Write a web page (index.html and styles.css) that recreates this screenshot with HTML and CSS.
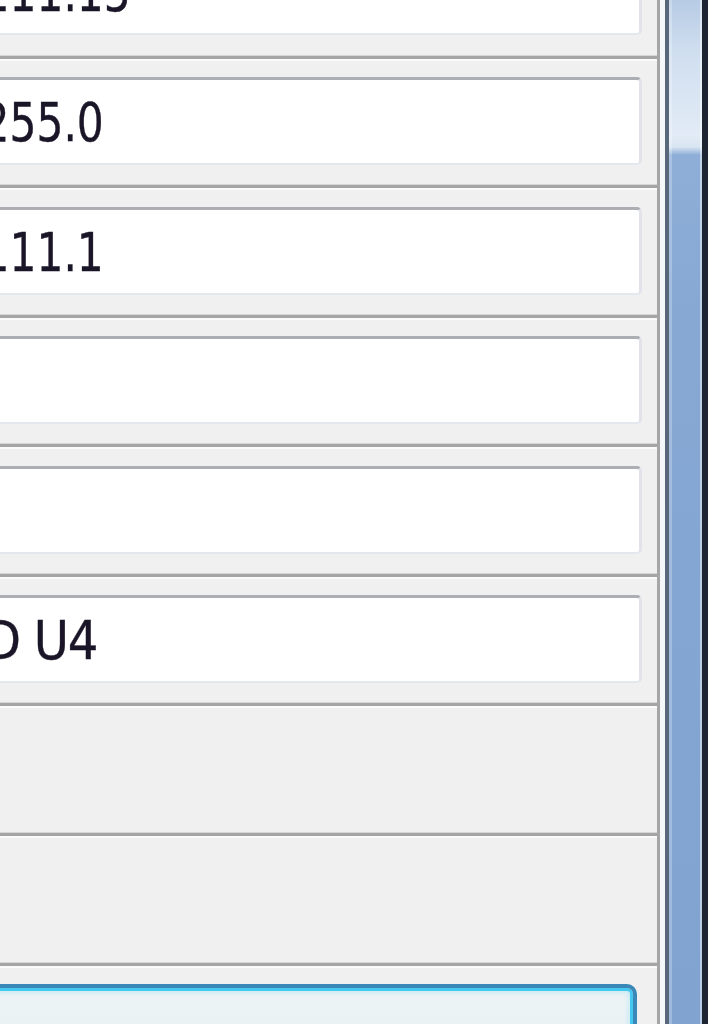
FILE: index.html
```html
<!DOCTYPE html>
<html lang="en">
<head>
<meta charset="utf-8">
<title>Network settings</title>
<link rel="stylesheet" href="styles.css">
</head>
<body>
<div class="window">
  <main class="panel">
    <div class="rows">
      <div class="row"><div class="field"><span class="value">192.168.111.15</span></div></div>
      <div class="row"><div class="field"><span class="value">255.255.255.0</span></div></div>
      <div class="row"><div class="field"><span class="value">192.168.111.1</span></div></div>
      <div class="row"><div class="field"><span class="value"></span></div></div>
      <div class="row"><div class="field"><span class="value"></span></div></div>
      <div class="row"><div class="field"><span class="value value-name">D U4</span></div></div>
      <div class="row"></div>
      <div class="row"></div>
      <div class="row"><button class="btn" type="button">OK</button></div>
    </div>
  </main>
  <div class="gutter"></div>
  <div class="frame-edge"></div>
  <div class="frame"></div>
  <div class="frame-outer"></div>
</div>
</body>
</html>
```
FILE: styles.css
```css
html, body {
  margin: 0;
  padding: 0;
  height: 1024px;
  overflow: hidden;
  background: #f0f0f0;
}

.window {
  display: flex;
  height: 1024px;
  overflow: hidden;
}

.panel {
  flex: none;
  width: 657px;
  border-right: 3px solid #a6a6a6;
  background: #f0f0f0;
  overflow: hidden;
}

.rows {
  margin-top: -71.1px;
  display: flex;
  flex-direction: column;
}

.row {
  box-sizing: border-box;
  height: 129.6px;
  flex: none;
  border-top: 2px solid #fbfbfb;
  border-bottom: 3px solid #a5a5a5;
  box-shadow: 0 1px 0 #cfcfcf, 0 -1px 0 #d6d6d6 inset;
  padding-top: 16.5px;
  display: flex;
  align-items: flex-start;
}

.field {
  box-sizing: border-box;
  flex: 1;
  height: 88px;
  margin-left: -300px;
  margin-right: 15px;
  background: #ffffff;
  border-style: solid;
  border-width: 3px 3px 2px 3px;
  border-color: #acaeb4 #e2e3ea #e4e8ee #e2e3ea;
  border-radius: 5px;
  padding: 3px 0 0 90.5px;
  line-height: 80px;
  font-family: "DejaVu Sans Condensed", "DejaVu Sans", sans-serif;
  font-stretch: condensed;
  font-size: 53.5px;
  color: #1a1628;
  -webkit-text-stroke: 0.35px #1a1628;
  white-space: nowrap;
  overflow: hidden;
}

.value {
  display: inline-block;
  transform: scaleX(0.88);
  transform-origin: 0 0;
}

.value-name {
  margin-left: 190.5px;
  letter-spacing: -1.3px;
  transform: none;
}

.btn {
  box-sizing: border-box;
  flex: 1;
  height: 88px;
  margin-left: -900px;
  margin-right: 20px;
  border: 4px solid #3a88b7;
  border-radius: 10px;
  background: linear-gradient(to bottom, #eef4f5, #e6eef0);
  box-shadow: inset 0 0 0 3px #46c7ef, inset 0 0 5px 5px #c8eaf6;
  font-family: "DejaVu Sans Condensed", "DejaVu Sans", sans-serif;
  font-size: 53.5px;
  color: #1c1a2c;
  padding: 0;
}

.gutter {
  flex: none;
  width: 5px;
  background: #f6f7f8;
}

.frame-edge {
  flex: none;
  width: 4px;
  background: #58677a;
}

.frame {
  flex: none;
  box-sizing: border-box;
  width: 33px;
  border-left: 3px solid rgba(255, 255, 255, 0.25);
  border-right: 2px solid rgba(255, 255, 255, 0.45);
  background: linear-gradient(to bottom,
    #b6cbe5 0,
    #cfdeef 50px,
    #e2ebf6 135px,
    #d9e5f2 147px,
    #8eaed7 155px,
    #86a8d3 320px,
    #80a3d0 1024px);
}

.frame-outer {
  flex: none;
  width: 6px;
  background: #1d2532;
}
```
